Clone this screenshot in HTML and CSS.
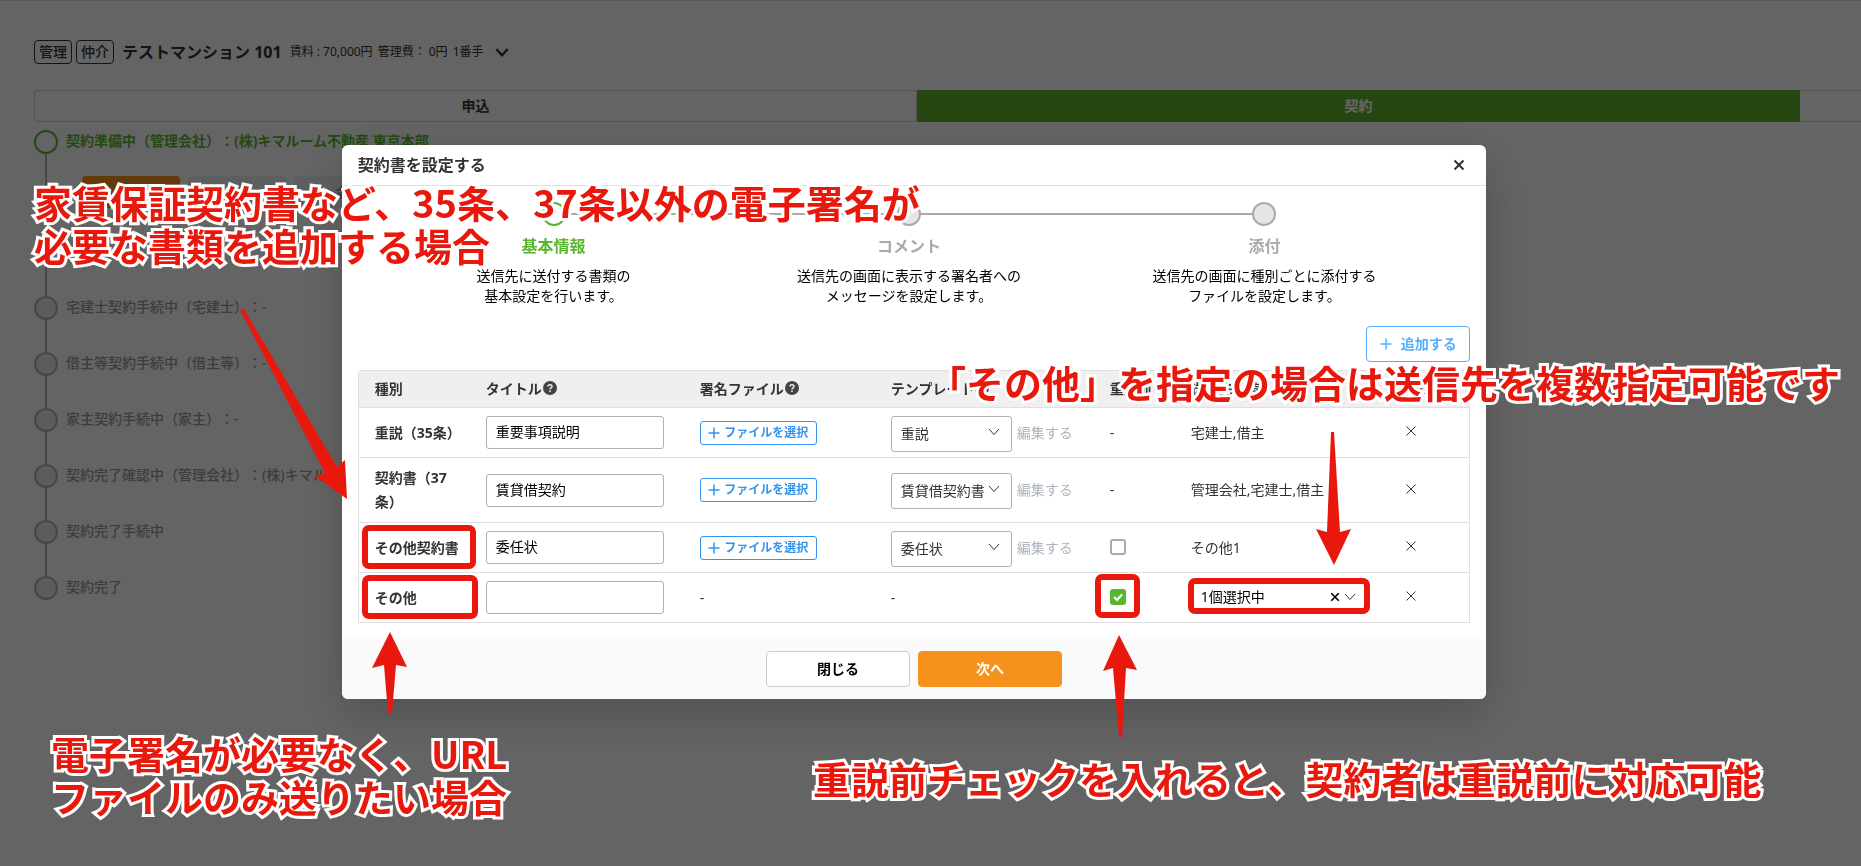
FILE: index.html
```html
<!DOCTYPE html>
<html lang="ja">
<head>
  <meta charset="UTF-8" />
  <meta name="viewport" content="width=device-width, initial-scale=1.0" />
  <title>契約書を設定する</title>
  <link rel="stylesheet" href="styles.css">
</head>
<body>
  <svg class="defs" width="0" height="0" aria-hidden="true">
    <symbol id="icon-plus" viewBox="0 0 12 12"><path d="M6 0.5V11.5M0.5 6H11.5" fill="none" stroke="currentColor" stroke-width="1.5" /></symbol>
    <symbol id="icon-close" viewBox="0 0 12 12"><path d="M1.5 1.5L10.5 10.5M10.5 1.5L1.5 10.5" fill="none" stroke="currentColor" /></symbol>
    <symbol id="icon-chevron" viewBox="0 0 12 8"><path d="M1 1L6 6.5L11 1" fill="none" stroke="currentColor" /></symbol>
    <symbol id="icon-help" viewBox="0 0 14 14"><circle cx="7" cy="7" r="7" fill="#444" /><path d="M5 5.6C5 3.2 9 3.2 9 5.4C9 6.9 7 6.8 7 8.4M7 9.6V11" fill="none" stroke="#efefef" stroke-width="1.5" /></symbol>
  </svg>

  <main class="page">
    <header class="property">
      <span class="tag">管理</span>
      <span class="tag">仲介</span>
      <h1>テストマンション 101</h1>
      <span class="fee">賃料 : 70,000円</span>
      <span class="fee">管理費： 0円</span>
      <span class="fee">1番手</span>
      <button type="button" class="expand" aria-label="詳細を開く"><svg width="14" height="9"><use href="#icon-chevron" /></svg></button>
    </header>

    <nav class="tabs">
      <a href="#apply">申込</a>
      <a href="#contract" class="active">契約</a>
      <a href="#next" aria-label="次"></a>
    </nav>

    <ol class="progress">
      <li class="current">
        <div class="marker"></div>
        <div>
          <p>契約準備中（管理会社）：(株)キマルーム不動産 東京本部</p>
          <div class="progress-actions">
            <button type="button" class="primary" aria-label="設定"></button>
            <button type="button" aria-label="確認"></button>
            <button type="button">会</button>
          </div>
        </div>
      </li>
      <li><div class="marker"></div><p>宅建士契約手続中（宅建士）：-</p></li>
      <li><div class="marker"></div><p>借主等契約手続中（借主等）：-</p></li>
      <li><div class="marker"></div><p>家主契約手続中（家主）：-</p></li>
      <li><div class="marker"></div><p>契約完了確認中（管理会社）：(株)キマルーム不動産 東京本部</p></li>
      <li><div class="marker"></div><p>契約完了手続中</p></li>
      <li><div class="marker"></div><p>契約完了</p></li>
    </ol>
  </main>

  <div class="overlay">
    <section class="modal" role="dialog" aria-labelledby="modal-title">
      <header class="modal-header">
        <h2 id="modal-title">契約書を設定する</h2>
        <button type="button" class="close" aria-label="閉じる"><svg width="12" height="12"><use href="#icon-close" /></svg></button>
      </header>

      <div class="modal-body">
        <ol class="steps">
          <li class="current">
            <div class="track"><span class="circle"></span></div>
            <h3>基本情報</h3>
            <p>送信先に送付する書類の<br>基本設定を行います。</p>
          </li>
          <li>
            <div class="track"><span class="circle"></span></div>
            <h3>コメント</h3>
            <p>送信先の画面に表示する署名者への<br>メッセージを設定します。</p>
          </li>
          <li>
            <div class="track"><span class="circle"></span></div>
            <h3>添付</h3>
            <p>送信先の画面に種別ごとに添付する<br>ファイルを設定します。</p>
          </li>
        </ol>

        <div class="toolbar">
          <button type="button" class="add"><svg width="12" height="12"><use href="#icon-plus" /></svg>追加する</button>
        </div>

        <table class="documents">
          <colgroup>
            <col class="col-kind">
            <col class="col-title">
            <col class="col-file">
            <col class="col-template">
            <col class="col-before">
            <col>
            <col class="col-delete">
          </colgroup>
          <thead>
            <tr>
              <th scope="col">種別</th>
              <th scope="col">タイトル<svg class="help" width="14" height="14"><use href="#icon-help" /></svg></th>
              <th scope="col">署名ファイル<svg class="help" width="14" height="14"><use href="#icon-help" /></svg></th>
              <th scope="col">テンプレート<svg class="help" width="14" height="14"><use href="#icon-help" /></svg></th>
              <th scope="col">重説前</th>
              <th scope="col">送信先一覧</th>
              <th scope="col">削除</th>
            </tr>
          </thead>
          <tbody>
            <tr>
              <th scope="row">重説（35条）</th>
              <td><input type="text" class="title-input" aria-label="タイトル" value="重要事項説明"></td>
              <td><button type="button" class="file"><svg width="12" height="12"><use href="#icon-plus" /></svg>ファイルを選択</button></td>
              <td>
                <div class="template">
                  <div class="select"><select aria-label="テンプレート"><option>重説</option></select><svg width="12" height="8"><use href="#icon-chevron" /></svg></div>
                  <a href="#edit">編集する</a>
                </div>
              </td>
              <td>-</td>
              <td>宅建士,借主</td>
              <td><button type="button" class="delete" aria-label="削除"><svg width="12" height="12"><use href="#icon-close" /></svg></button></td>
            </tr>
            <tr class="tall">
              <th scope="row">契約書（37条）</th>
              <td><input type="text" class="title-input" aria-label="タイトル" value="賃貸借契約"></td>
              <td><button type="button" class="file"><svg width="12" height="12"><use href="#icon-plus" /></svg>ファイルを選択</button></td>
              <td>
                <div class="template">
                  <div class="select"><select aria-label="テンプレート"><option>賃貸借契約書</option></select><svg width="12" height="8"><use href="#icon-chevron" /></svg></div>
                  <a href="#edit">編集する</a>
                </div>
              </td>
              <td>-</td>
              <td>管理会社,宅建士,借主</td>
              <td><button type="button" class="delete" aria-label="削除"><svg width="12" height="12"><use href="#icon-close" /></svg></button></td>
            </tr>
            <tr>
              <th scope="row">その他契約書</th>
              <td><input type="text" class="title-input" aria-label="タイトル" value="委任状"></td>
              <td><button type="button" class="file"><svg width="12" height="12"><use href="#icon-plus" /></svg>ファイルを選択</button></td>
              <td>
                <div class="template">
                  <div class="select"><select aria-label="テンプレート"><option>委任状</option></select><svg width="12" height="8"><use href="#icon-chevron" /></svg></div>
                  <a href="#edit">編集する</a>
                </div>
              </td>
              <td><label class="check"><input type="checkbox" aria-label="重説前"><svg width="16" height="16" viewBox="0 0 16 16"><path d="M4 8L7 11L12 5.5" /></svg></label></td>
              <td>その他1</td>
              <td><button type="button" class="delete" aria-label="削除"><svg width="12" height="12"><use href="#icon-close" /></svg></button></td>
            </tr>
            <tr>
              <th scope="row">その他</th>
              <td><input type="text" class="title-input" aria-label="タイトル"></td>
              <td>-</td>
              <td>-</td>
              <td><label class="check"><input type="checkbox" aria-label="重説前" checked><svg width="16" height="16" viewBox="0 0 16 16"><path d="M4 8L7 11L12 5.5" /></svg></label></td>
              <td>
                <div class="recipients">
                  <select aria-label="送信先"><option>1個選択中</option></select>
                  <button type="button" aria-label="クリア"><svg width="10" height="10"><use href="#icon-close" /></svg></button>
                  <svg width="12" height="8"><use href="#icon-chevron" /></svg>
                </div>
              </td>
              <td><button type="button" class="delete" aria-label="削除"><svg width="12" height="12"><use href="#icon-close" /></svg></button></td>
            </tr>
          </tbody>
        </table>
      </div>

      <footer class="modal-footer">
        <button type="button">閉じる</button>
        <button type="button" class="primary">次へ</button>
      </footer>
    </section>
  </div>

  <!-- guide notes drawn over the screen -->
  <div class="notes">
    <svg class="arrows" width="100%" height="100%" aria-hidden="true">
      <path d="M240 310L244 309L337 467L345 460L347 499L315 476L325 473Z" />
      <path d="M1331 432H1334L1340 532L1351 529L1334 565L1316 529L1327 532Z" />
      <path d="M1119 635L1137 670L1126 668L1122 737H1119L1113 668L1103 671Z" />
      <path d="M390 632L407 667L396 665L392 713H388L384 665L372 668Z" />
      <rect x="365" y="528" width="108" height="38" rx="4" />
      <rect x="365" y="578" width="110" height="38" rx="4" />
      <rect x="1098" y="577" width="39" height="38" rx="4" />
      <rect x="1191" y="581" width="176" height="30" rx="4" />
    </svg>
    <p class="note note-extra">家賃保証契約書など、35条、37条以外の電子署名が<br>必要な書類を追加する場合</p>
    <p class="note note-recipients">「その他」を指定の場合は送信先を複数指定可能です</p>
    <p class="note note-url">電子署名が必要なく、URL<br>ファイルのみ送りたい場合</p>
    <p class="note note-before">重説前チェックを入れると、契約者は重説前に対応可能</p>
  </div>
</body>
</html>
```
FILE: styles.css
```css
*,
*::before,
*::after {
  box-sizing: border-box;
}
body {
  margin: 0;
  min-height: 100vh;
  overflow: hidden;
  font-family: "Noto Sans", "Noto Sans CJK JP", sans-serif;
  font-size: 14px;
  line-height: 20px;
  text-spacing-trim: space-all;
  color: #333;
  background-color: #fafafa;
}
h1, h2, h3, p, ol {
  margin: 0;
  padding: 0;
}
ol {
  list-style: none;
}
button, input, select {
  font: inherit;
  color: inherit;
}
button {
  display: inline-flex;
  align-items: center;
  justify-content: center;
  padding: 0;
  border: none;
  background: none;
  cursor: pointer;
}
a {
  color: inherit;
  text-decoration: none;
}
.defs {
  position: absolute;
}

/* page behind the modal */
.page {
  padding: 39px 0 0 34px;
  border-top: 1px solid #d8d8d8;
}
.property {
  display: flex;
  align-items: center;
  height: 24px;
}
.tag {
  padding: 0 4px;
  height: 24px;
  line-height: 22px;
  margin-right: 4px;
  border: 1px solid #333;
  border-radius: 4px;
  font-weight: 500;
}
.property h1 {
  margin: 0 8px 0 4px;
  font-size: 16px;
}
.fee {
  margin-right: 5px;
  font-size: 12px;
}
.expand {
  margin-left: 6px;
}
.expand use {
  stroke-width: 2px;
}
.tabs {
  display: grid;
  grid-template-columns: 29fr 29fr 2fr;
  margin-top: 26px;
}
.tabs a {
  height: 32px;
  line-height: 30px;
  text-align: center;
  font-weight: bold;
  border: 1px solid #d0d0d0;
}
.tabs a:first-child {
  border-radius: 4px 0 0 4px;
}
.tabs .active {
  color: #fff;
  background-color: #5cb531;
  border-color: #5cb531;
}
.tabs a:last-child {
  border-width: 1px 0;
}
.progress {
  margin-top: 8px;
}
.progress li {
  display: flex;
  gap: 8px;
  height: 56px;
  line-height: 22px;
  color: #999;
  font-weight: 500;
}
.progress .current {
  height: 166px;
  color: #5cb531;
  font-weight: bold;
}
.marker {
  display: flex;
  flex-direction: column;
  align-items: center;
  width: 24px;
}
.marker::before {
  content: "";
  width: 24px;
  height: 24px;
  border: 2px solid #b2b2b2;
  border-radius: 50%;
  background-color: #e6e6e6;
}
.marker::after {
  content: "";
  flex: 1;
  width: 2px;
  background-color: #b2b2b2;
}
.current .marker::before {
  border-color: #5cb531;
  background-color: transparent;
}
.progress li:last-child .marker::after {
  display: none;
}
.progress-actions {
  display: flex;
  gap: 8px;
  padding: 24px 0 0 16px;
}
.progress-actions button {
  width: 98px;
  height: 32px;
  border-radius: 4px;
  color: #999;
  background-color: #e9ecf0;
}
.progress-actions .primary {
  background-color: #f5921e;
}

/* modal */
.overlay {
  position: fixed;
  inset: 0;
  padding: 145px 33px 0 0;
  background-color: rgba(0, 0, 0, 0.6);
}
.modal {
  width: 62.6%;
  margin: 0 auto;
  overflow: hidden;
  background-color: #fff;
  border-radius: 6px;
  box-shadow: 0 16px 48px rgba(0, 0, 0, 0.2);
}
.modal-header {
  display: flex;
  align-items: center;
  justify-content: space-between;
  height: 41px;
  padding: 0 21px 0 16px;
  border-bottom: 1px solid #e0e0e0;
}
.modal-header h2 {
  font-size: 16px;
}
.close use {
  stroke-width: 2px;
}
.modal-body {
  padding: 16px;
}
.steps {
  display: flex;
  padding: 0 28px 0 18px;
  text-align: center;
}
.steps li {
  flex: 1;
  color: #000;
}
.track {
  display: flex;
  align-items: center;
  margin-bottom: 10px;
}
.track::before,
.track::after {
  content: "";
  flex: 1;
  height: 2px;
  background-color: #aaa;
}
.steps li:first-child .track::before,
.steps li:last-child .track::after {
  background-color: transparent;
}
.circle {
  width: 24px;
  height: 24px;
  border: 2px solid #aaa;
  border-radius: 50%;
  background-color: #e6e6e6;
}
.steps .current .circle {
  border-color: #5cb531;
  background-color: #fff;
}
.steps h3 {
  margin-bottom: 10px;
  font-size: 16px;
  color: #aaa;
}
.steps .current h3 {
  color: #5cb531;
}
.toolbar {
  display: flex;
  justify-content: flex-end;
  margin: 20px 0 8px;
}
.add {
  gap: 9px;
  width: 104px;
  height: 36px;
  border: 1px solid #54adff;
  border-radius: 4px;
  color: #54adff;
  font-weight: bold;
}
.documents {
  width: 100%;
  table-layout: fixed;
  border-collapse: separate;
  border-spacing: 0;
  border: 1px solid #e0e0e0;
  border-bottom: none;
  border-radius: 4px 4px 0 0;
}
.documents th,
.documents td {
  height: 50px;
  padding: 0 0 0 16px;
  border-bottom: 1px solid #e0e0e0;
  text-align: left;
  vertical-align: middle;
}
.documents thead th {
  height: 37px;
  background-color: #efefef;
}
.documents tbody th {
  padding-right: 8px;
  line-height: 24px;
}
.documents .tall td {
  height: 65px;
}
.col-kind {
  width: 111px;
}
.col-title {
  width: 214px;
}
.col-file {
  width: 191px;
}
.col-template {
  width: 219px;
}
.col-before {
  width: 81px;
}
.col-delete {
  width: 80px;
}
.help {
  margin-left: 1px;
  vertical-align: -1px;
}
.title-input {
  display: block;
  width: 178px;
  height: 33px;
  padding: 0 9px 3px;
  border: 1px solid #b0b0b0;
  border-radius: 3px;
  color: #000;
  background-color: #fff;
}
.file {
  gap: 4px;
  width: 117px;
  height: 24px;
  border: 1px solid #3593ec;
  border-radius: 3px;
  color: #3593ec;
  font-size: 12px;
  font-weight: bold;
  vertical-align: middle;
}
.template {
  display: flex;
  align-items: center;
  gap: 5px;
}
.template a {
  color: #adb5bd;
}
.select {
  position: relative;
  margin-top: 2px;
}
.select select {
  display: block;
  width: 121px;
  height: 36px;
  padding: 0 9px;
  border: 1px solid #b0b0b0;
  border-radius: 3px;
  appearance: none;
  background-color: #fff;
}
.select svg {
  position: absolute;
  top: 12px;
  right: 12px;
  color: #333;
  pointer-events: none;
}
.check {
  display: grid;
  width: 16px;
  height: 16px;
  margin-bottom: 2px;
}
.check input,
.check svg {
  grid-area: 1 / 1;
}
.check input {
  width: 16px;
  height: 16px;
  margin: 0;
  border: 2px solid #aaa;
  border-radius: 3px;
  appearance: none;
}
.check input:checked {
  border-color: #5cb531;
  background-color: #5cb531;
}
.check path {
  fill: none;
  stroke: #fff;
  stroke-width: 2px;
}
.recipients {
  display: flex;
  align-items: center;
  gap: 4px;
  width: 176px;
  height: 30px;
  margin-bottom: 2px;
  padding: 0 11px 0 10px;
  color: #000;
}
.recipients select {
  flex: 1;
  min-width: 0;
  padding: 0;
  border: none;
  appearance: none;
  background: none;
}
.recipients use {
  stroke-width: 2px;
}
.recipients > svg {
  color: #333;
}
.recipients > svg use {
  stroke-width: 1px;
}
.delete {
  display: flex;
  margin-bottom: 3px;
  color: #333;
}
.modal-footer {
  display: flex;
  justify-content: center;
  gap: 8px;
  padding: 12px;
  background-color: #fafafa;
}
.modal-footer button {
  width: 144px;
  height: 36px;
  border: 1px solid #ccc;
  border-radius: 4px;
  color: #000;
  font-weight: bold;
  background-color: #fff;
}
.modal-footer .primary {
  color: #fff;
  border-color: #f5921e;
  background-color: #f5921e;
}

/* notes */
.notes {
  position: absolute;
  inset: 0;
  overflow: hidden;
  pointer-events: none;
}
.arrows {
  display: block;
}
.arrows path {
  fill: #e8190c;
}
.arrows rect {
  fill: none;
  stroke: #e8190c;
  stroke-width: 6px;
}
.note {
  position: absolute;
  font-family: "Noto Sans CJK JP", sans-serif;
  font-size: 38px;
  line-height: 43px;
  font-weight: bold;
  color: #e8190c;
  white-space: nowrap;
  -webkit-text-stroke: 6px #fff;
  paint-order: stroke fill;
}
.note-extra {
  top: 180px;
  left: 34px;
}
.note-recipients {
  top: 360px;
  left: 928px;
}
.note-url {
  top: 731px;
  left: 51px;
}
.note-before {
  top: 756px;
  left: 813px;
}
```
